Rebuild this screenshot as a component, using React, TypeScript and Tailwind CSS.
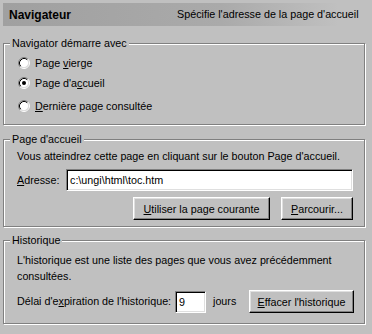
import React from "react";

const font = { fontFamily: '"Liberation Sans", Arial, sans-serif' };

function Radio({ checked }: { checked?: boolean }) {
  return (
    <svg width="12" height="12" viewBox="0 0 12 12" className="shrink-0">
      <circle cx="6" cy="6" r="4.5" fill="#fff" />
      <path d="M2.11 9.89 A5.5 5.5 0 0 1 9.89 2.11" stroke="#808080" strokeWidth="1" fill="none" />
      <path d="M9.89 2.11 A5.5 5.5 0 0 1 2.11 9.89" stroke="#fff" strokeWidth="1" fill="none" />
      <path d="M2.82 9.18 A4.5 4.5 0 0 1 9.18 2.82" stroke="#000" strokeWidth="1" fill="none" />
      <path d="M9.18 2.82 A4.5 4.5 0 0 1 2.82 9.18" stroke="#dfdfdf" strokeWidth="1" fill="none" />
      {checked && <circle cx="6" cy="6" r="2" fill="#000" />}
    </svg>
  );
}

function Group({ label, className, children }: { label: string; className: string; children: React.ReactNode }) {
  return (
    <div className={"relative w-[362px] border border-[#808080] shadow-[inset_1px_1px_0_#fff,1px_1px_0_#fff] " + className}>
      <div className="absolute -top-[8px] left-[6px] bg-[#c0c0c0] px-[2px] leading-[14px]">{label}</div>
      {children}
    </div>
  );
}

const btn =
  "flex items-center justify-center shrink-0 h-[23px] border border-t-white border-l-white border-r-black border-b-black shadow-[inset_-1px_-1px_0_#808080,inset_1px_1px_0_#dfdfdf] bg-[#c0c0c0] leading-[14px]";
const field =
  "flex items-center h-[22px] bg-white border border-t-[#808080] border-l-[#808080] border-r-white border-b-white shadow-[inset_1px_1px_0_#000,inset_-1px_-1px_0_#dfdfdf] px-[3px] leading-[14px]";

export default function App() {
  return (
    <div className="w-[372px] h-[334px] bg-[#c0c0c0] p-[3px] text-[10.75px] text-black whitespace-nowrap" style={font}>
      <div className="flex items-center h-[23px] w-[365px] bg-gradient-to-r from-[#a0a0a0] via-[#aaaaaa] via-60% to-[#c0c0c0] to-[92%] pl-[6px]">
        <span className="font-bold text-[12px] w-[168px]">Navigateur</span>
        <span>Spécifie l'adresse de la page d'accueil</span>
      </div>

      <Group label="Navigator démarre avec" className="mt-[17px] h-[82px]">
        <div className="flex flex-col pt-[9px] pl-[14px]">
          <div className="flex items-center h-[20px] gap-[5px]">
            <Radio />
            <span>
              Page <u>v</u>ierge
            </span>
          </div>
          <div className="flex items-center h-[20px] gap-[5px]">
            <Radio checked />
            <span>
              Page d'a<u>c</u>cueil
            </span>
          </div>
          <div className="flex items-center h-[20px] gap-[5px] mt-[3px]">
            <Radio />
            <span>
              <u>D</u>ernière page consultée
            </span>
          </div>
        </div>
      </Group>

      <Group label="Page d'accueil" className="mt-[14px] h-[88px]">
        <div className="flex flex-col pt-[8px] pl-[13px] pr-[11px]">
          <div className="h-[16px] leading-[16px]">Vous atteindrez cette page en cliquant sur le bouton Page d'accueil.</div>
          <div className="flex items-center mt-[5px]">
            <span className="w-[49px] shrink-0">
              <u>A</u>dresse:
            </span>
            <div className={field + " flex-1"}>c:\ungi\html\toc.htm</div>
          </div>
          <div className="flex justify-end gap-[11px] mt-[6px]">
            <div className={btn + " w-[137px]"}>
              <span>
                <u>U</u>tiliser la page courante
              </span>
            </div>
            <div className={btn + " w-[72px]"}>
              <span>
                <u>P</u>arcourir...
              </span>
            </div>
          </div>
        </div>
      </Group>

      <Group label="Historique" className="mt-[13px] h-[84px]">
        <div className="flex flex-col pt-[11px] pl-[13px] pr-[11px]">
          <div className="leading-[16px]">
            L'historique est une liste des pages que vous avez précédemment
            <br />
            consultées.
          </div>
          <div className="flex items-center mt-[6px]">
            <span className="w-[158px] shrink-0">
              Délai d'e<u>x</u>piration de l'historique:
            </span>
            <div className={field + " w-[31px] shrink-0"}>9</div>
            <span className="ml-[7px] w-[36px] shrink-0">jours</span>
            <div className={btn + " w-[105px]"}>
              <span>
                <u>E</u>ffacer l'historique
              </span>
            </div>
          </div>
        </div>
      </Group>
    </div>
  );
}
